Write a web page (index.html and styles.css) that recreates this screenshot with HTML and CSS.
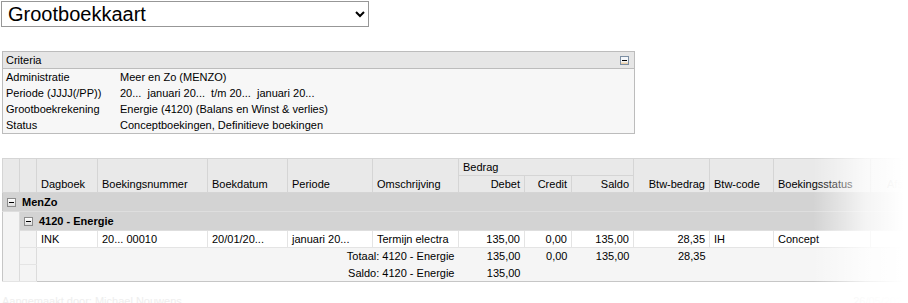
FILE: index.html
```html
<!DOCTYPE html>
<html lang="nl">
<head>
  <meta charset="UTF-8" />
  <title>Grootboekkaart</title>
  <link rel="stylesheet" href="styles.css">
</head>
<body>

  <!-- Rapportkeuze -->
  <select class="rapport">
    <option>Grootboekkaart</option>
  </select>

  <!-- Criteria -->
  <div class="criteria">
    <div class="criteriaKop">
      <span>Criteria</span>
      <span class="knop knopBlauw"></span>
    </div>
    <div class="criteriaLijst">
      <span>Administratie</span><span>Meer en Zo (MENZO)</span>
      <span>Periode (JJJJ(/PP))</span><span>20...&nbsp; januari 20...&nbsp; t/m 20...&nbsp; januari 20...</span>
      <span>Grootboekrekening</span><span>Energie (4120) (Balans en Winst &amp; verlies)</span>
      <span>Status</span><span>Conceptboekingen, Definitieve boekingen</span>
    </div>
  </div>

  <!-- Overzicht -->
  <div class="overzicht">
    <div class="tabelVak">
      <table class="tabel">
        <colgroup>
          <col style="width:17px"><col style="width:17px"><col style="width:61px"><col style="width:110px">
          <col style="width:80px"><col style="width:85px"><col style="width:86px"><col style="width:66px">
          <col style="width:47px"><col style="width:62px"><col style="width:76px"><col style="width:64px">
          <col style="width:97px"><col style="width:90px">
        </colgroup>
        <thead>
          <tr class="kop1">
            <th rowspan="2"></th>
            <th rowspan="2"></th>
            <th rowspan="2">Dagboek</th>
            <th rowspan="2">Boekingsnummer</th>
            <th rowspan="2">Boekdatum</th>
            <th rowspan="2">Periode</th>
            <th rowspan="2">Omschrijving</th>
            <th colspan="3" class="groepKop">Bedrag</th>
            <th rowspan="2" class="rechts">Btw-bedrag</th>
            <th rowspan="2">Btw-code</th>
            <th rowspan="2">Boekingsstatus</th>
            <th rowspan="2" class="afs">Afschrijving</th>
          </tr>
          <tr class="kop2">
            <th class="rechts">Debet</th>
            <th class="rechts">Credit</th>
            <th class="rechts">Saldo</th>
          </tr>
        </thead>
        <tbody>
          <tr class="groep">
            <td colspan="14"><span class="knop"></span><b>MenZo</b></td>
          </tr>
          <tr class="groep">
            <td rowspan="4" class="inspring"></td>
            <td colspan="13"><span class="knop"></span><b>4120 - Energie</b></td>
          </tr>
          <tr class="regel">
            <td class="inspring"></td>
            <td>INK</td>
            <td>20... 00010</td>
            <td>20/01/20...</td>
            <td>januari 20...</td>
            <td>Termijn electra</td>
            <td class="rechts">135,00</td>
            <td class="rechts">0,00</td>
            <td class="rechts">135,00</td>
            <td class="rechts">28,35</td>
            <td>IH</td>
            <td>Concept</td>
            <td></td>
          </tr>
          <tr class="totaal">
            <td class="inspring"></td>
            <td colspan="5" class="rechts">Totaal: 4120 - Energie</td>
            <td class="rechts">135,00</td>
            <td class="rechts">0,00</td>
            <td class="rechts">135,00</td>
            <td class="rechts">28,35</td>
            <td></td><td></td><td></td>
          </tr>
          <tr class="totaal">
            <td class="inspring"></td>
            <td colspan="5" class="rechts">Saldo: 4120 - Energie</td>
            <td class="rechts">135,00</td>
            <td></td><td></td><td></td><td></td><td></td><td></td>
          </tr>
        </tbody>
      </table>
    </div>

    <div class="voet">
      <span>Aangemaakt door: Michael Nouwens</span>
      <span>26/05/2021 11:52</span>
    </div>

    <div class="vervaag"></div>
  </div>

</body>
</html>
```

FILE: styles.css
```css
* {
  box-sizing: border-box;
}

body {
  margin: 0;
  font-family: 'Liberation Sans', Arial, sans-serif;
  font-size: 11px;
  color: #000;
  overflow: hidden;
}

.rapport {
  display: block;
  margin: 1px 0 0 1px;
  width: 368px;
  height: 26px;
  font-family: 'Liberation Sans', Arial, sans-serif;
  font-size: 20px;
  border: 1px solid #979797;
  border-radius: 0;
  padding: 0 2px;
  background: #fff;
  color: #000;
}

/* Criteria blok */
.criteria {
  margin: 24px 0 0 2px;
  width: 633px;
  border: 1px solid #bcbcbc;
  background-color: #f7f7f7;
}

.criteriaKop {
  display: flex;
  justify-content: space-between;
  align-items: center;
  height: 17px;
  padding: 0 5px 0 3px;
  background-color: #e6e6e6;
  border-bottom: 1px solid #bcbcbc;
}

.criteriaLijst {
  display: grid;
  grid-template-columns: 114px 1fr;
  grid-auto-rows: 16px;
  align-items: center;
  padding-left: 3px;
}

.knop {
  display: inline-block;
  position: relative;
  width: 9px;
  height: 9px;
  border: 1px solid #8c8c8c;
  background: linear-gradient(#ffffff, #dcdcdc);
  vertical-align: middle;
}

.knop::after {
  content: "";
  position: absolute;
  left: 1px;
  right: 1px;
  top: 3px;
  height: 1px;
  background: #000;
}

.knopBlauw {
  border-color: #7d8fa3;
  background: linear-gradient(#f4f7fb 60%, #e7c79a);
}

/* Overzicht tabel */
.overzicht {
  position: relative;
  margin-top: 24px;
}

.tabelVak {
  overflow: hidden;
  padding-left: 2px;
}

.tabel {
  border-collapse: collapse;
  table-layout: fixed;
  width: 958px;
  border: 1px solid #c6c6c6;
}

.tabel th {
  font-weight: normal;
  text-align: left;
  vertical-align: bottom;
  background-color: #e9e9e9;
  border: 1px solid #d5d5d5;
  padding: 0 4px 2px 4px;
  white-space: nowrap;
  overflow: hidden;
}

.kop1 th {
  height: 17px;
}

.kop2 th {
  height: 17px;
}

.tabel th.groepKop {
  vertical-align: middle;
  padding-bottom: 0;
}

.tabel th.afs {
  color: #999;
  padding-left: 16px;
}

.tabel td {
  padding: 0 4px;
  white-space: nowrap;
  overflow: hidden;
}

.rechts {
  text-align: right !important;
}

.groep td {
  height: 19px;
  background-color: #d3d3d3;
  border-bottom: 1px solid #dedede;
  padding-left: 4px;
}

.groep .knop {
  margin-right: 6px;
  margin-top: -2px;
}

.tabel td.inspring {
  background-color: #f4f4f4;
  border-right: 1px solid #dcdcdc;
  border-bottom: 1px solid #e4e4e4;
  padding: 0;
}

.regel td {
  height: 17px;
  background-color: #fff;
  border-right: 1px solid #e4e4e4;
  border-bottom: 1px solid #e4e4e4;
}

.totaal td {
  height: 17px;
  background-color: #f5f5f5;
}

.voet {
  display: flex;
  justify-content: space-between;
  padding: 13px 0 0 2px;
  color: #eeeeee;
  white-space: nowrap;
}

.voet span:last-child {
  margin-right: -30px;
}

/* witte vervaging rechts */
.vervaag {
  position: absolute;
  top: -2px;
  right: 0;
  bottom: 0;
  width: 95px;
  background: linear-gradient(to right, rgba(255, 255, 255, 0), rgba(255, 255, 255, 0.75) 55%, #fff 95%);
}
```
